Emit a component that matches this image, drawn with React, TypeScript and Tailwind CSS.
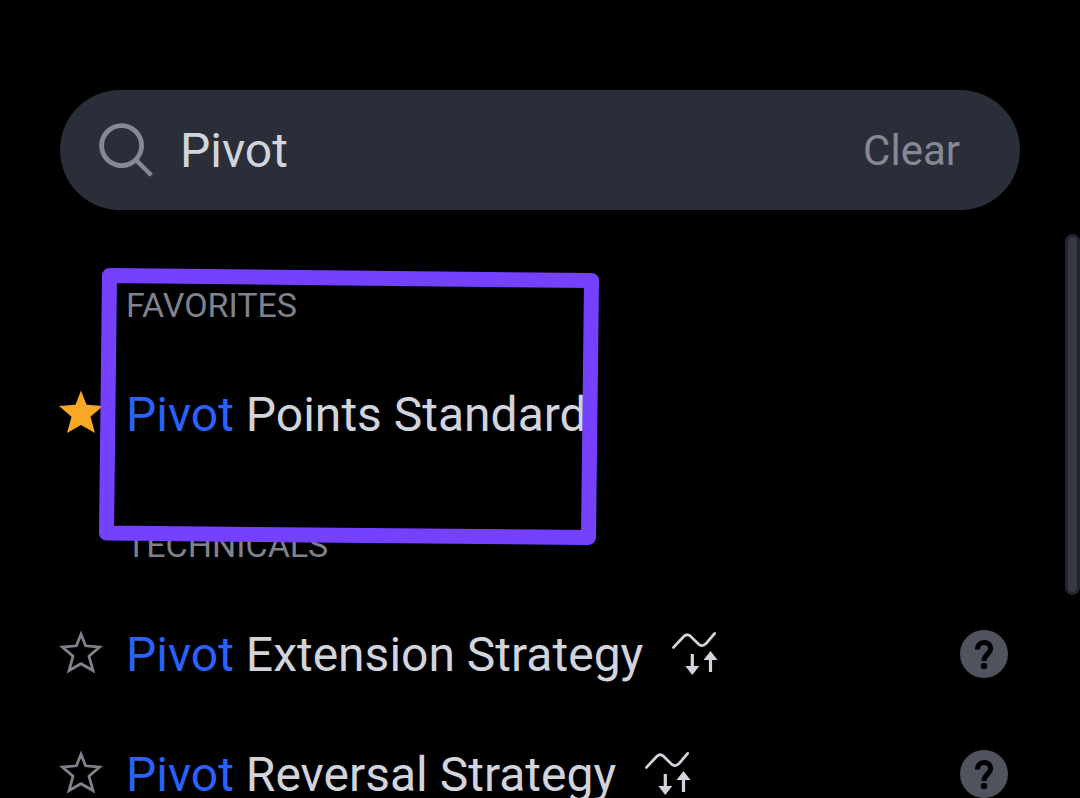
import { useState } from "react";

type Indicator = {
  id: string;
  name: string;
  favorite?: boolean;
  strategy?: boolean;
};

const favorites: Indicator[] = [
  { id: "pivot-standard", name: "Pivot Points Standard", favorite: true },
];

const technicals: Indicator[] = [
  { id: "pivot-extension", name: "Pivot Extension Strategy", strategy: true },
  { id: "pivot-reversal", name: "Pivot Reversal Strategy", strategy: true },
];

function SearchIcon() {
  return (
    <svg viewBox="0 0 56 56" className="h-14 w-14 shrink-0" fill="none" stroke="#868993">
      <circle cx="23.6" cy="23.6" r="20" strokeWidth="4.8" />
      <path d="M37.5 37.5 53.3 53.3" strokeWidth="4.4" />
    </svg>
  );
}

function StarIcon({ filled }: { filled?: boolean }) {
  return (
    <svg viewBox="0 0 44 48" className="h-12 w-11">
      {filled ? (
        <path
          fill="#f9a825"
          d="M22 0.5 27.5 14.7 44 16 31.5 26.7 36 43 22 35 8 43 12.5 26.7 0 16 16.5 14.7Z"
        />
      ) : (
        <path
          fill="none"
          stroke="#7f828c"
          strokeWidth="2.8"
          strokeMiterlimit="10"
          d="M22 4.2 26.6 15.8 40.6 17 30 26.3 34 40.5 22 33.7 10 40.5 14 26.3 3.4 17 17.4 15.8Z"
        />
      )}
    </svg>
  );
}

function StrategyIcon() {
  return (
    <svg viewBox="0 0 48 48" className="h-12 w-12 shrink-0" fill="none" stroke="#d1d4dc">
      <path
        d="M2.5 17.4 12 7.2Q15.5 3 19.5 6.2L26 12.6Q30.5 18 35 13.6L43.7 3.4"
        strokeWidth="2.8"
        strokeLinecap="round"
      />
      <path d="M21.3 24v13M39.5 42V29" strokeWidth="3.2" />
      <path d="M14.3 36h14l-7 9ZM32.5 30h14l-7-9Z" fill="#d1d4dc" stroke="none" />
    </svg>
  );
}

function HelpIcon() {
  return (
    <svg viewBox="0 0 48 48" className="h-12 w-12">
      <circle cx="24" cy="24" r="24" fill="#50535e" />
      <path
        d="M17.4 19.6C17.4 15.4 20 12.5 24 12.5S30.6 15 30.6 18.6C30.6 23.6 24 24.4 24 31"
        fill="none"
        stroke="#000"
        strokeWidth="5"
      />
      <circle cx="24" cy="36" r="3.2" fill="#000" />
    </svg>
  );
}

// paints the part of the name that matches the query in blue
function Highlight({ text, query }: { text: string; query: string }) {
  const at = text.toLowerCase().indexOf(query.toLowerCase());
  if (!query || at < 0) return <>{text}</>;
  return (
    <>
      {text.slice(0, at)}
      <span className="text-[#2962ff]">{text.slice(at, at + query.length)}</span>
      {text.slice(at + query.length)}
    </>
  );
}

function Section({ title, items, query }: { title: string; items: Indicator[]; query: string }) {
  return (
    <section>
      <h2 className="flex h-[120px] items-center pt-[22px] pl-[67px] text-[34px] text-[#7f828c]">
        {title}
      </h2>
      <ul>
        {items.map((item) => (
          <li key={item.id} className="flex h-[120px] items-center">
            <button type="button" aria-label="Toggle favorite" className="mr-[23px] shrink-0">
              <StarIcon filled={item.favorite} />
            </button>
            <span className="mr-7 pt-0.5 text-[48px] whitespace-nowrap text-[#d1d4dc]">
              <Highlight text={item.name} query={query} />
            </span>
            {item.strategy && (
              <>
                <StrategyIcon />
                <button type="button" aria-label={`About ${item.name}`} className="ml-auto shrink-0">
                  <HelpIcon />
                </button>
              </>
            )}
          </li>
        ))}
      </ul>
    </section>
  );
}

export default function App() {
  const [query, setQuery] = useState("Pivot");

  const filter = (list: Indicator[]) =>
    list.filter((i) => i.name.toLowerCase().includes(query.toLowerCase()));

  return (
    <div className="relative flex h-screen flex-col overflow-hidden bg-black pt-[90px] font-[Roboto,sans-serif]">
      {/* search bar */}
      <div className="mx-[60px] flex h-[120px] shrink-0 items-center rounded-full bg-[#2a2e39] pr-[60px] pl-[38px]">
        <SearchIcon />
        <input
          type="text"
          aria-label="Search indicators"
          value={query}
          onChange={(e) => setQuery(e.target.value)}
          className="ml-[26px] min-w-0 flex-1 bg-transparent pt-0.5 text-[48px] text-[#d1d4dc] outline-none"
        />
        <button type="button" onClick={() => setQuery("")} className="text-[42px] text-[#868993]">
          Clear
        </button>
      </div>

      {/* results */}
      <div className="mt-6 flex min-h-0 flex-1">
        <div className="min-w-0 flex-1 overflow-hidden pr-[57px] pl-[59px]">
          <Section title="FAVORITES" items={filter(favorites)} query={query} />
          <Section title="TECHNICALS" items={filter(technicals)} query={query} />
        </div>
        <div className="h-[64%] w-[15px] rounded-full border-3 border-[#23262f] bg-[#363a45]" />
      </div>

      {/* hand drawn marker around the favorites */}
      <svg
        viewBox="0 0 500 280"
        className="pointer-events-none absolute top-[267px] left-[99px] h-[280px] w-[500px]"
        fill="none"
        stroke="#7442ff"
        strokeWidth="15"
        strokeLinejoin="round"
      >
        <path d="M10.5 8.5 492.5 13.5 489.5 270.5 7.5 266Z" />
      </svg>
    </div>
  );
}
